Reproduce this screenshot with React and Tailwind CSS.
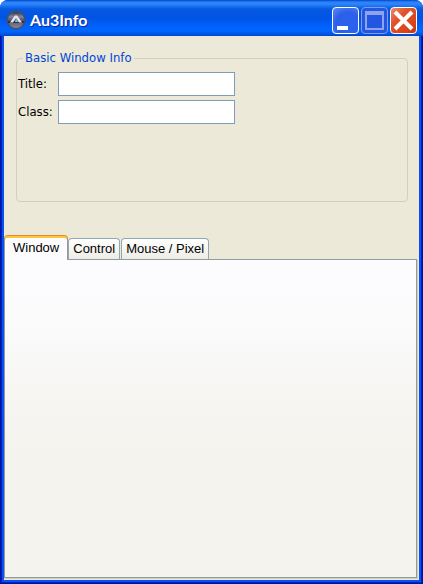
import { useState } from "react";

const tabs = ["Window", "Control", "Mouse / Pixel"];

function AppIcon() {
  return (
    <svg className="h-5 w-5 shrink-0" viewBox="0 0 20 20" aria-hidden="true">
      <defs>
        <linearGradient id="disc" x1="0" y1="0" x2="0" y2="1">
          <stop offset="0" stopColor="#34384a" />
          <stop offset="0.3" stopColor="#8189a8" />
          <stop offset="0.5" stopColor="#50566c" />
          <stop offset="1" stopColor="#8088a2" />
        </linearGradient>
      </defs>
      <circle cx="10" cy="10" r="9.5" fill="#4a4f60" />
      <circle cx="10" cy="10" r="8" fill="url(#disc)" />
      <path d="M1.500 11 L18.500 11 L18 13 L2 13 Z" fill="#30333f" />
      <path d="M4 12.500 L8.500 6 Q10 4.500 11.500 6 L16 12.500 L13 12.500 L10 8 L7 12.500 Z" fill="#e4e7f0" />
      <path d="M10 9 L12 12 L9 12 Z" fill="#aeb4c6" />
    </svg>
  );
}

function TitleBar() {
  const button =
    "flex h-[27px] w-[27px] items-center justify-center rounded border";
  return (
    <header className="flex h-9 shrink-0 items-center bg-[linear-gradient(to_bottom,#0042d0_0px,#2a83f5_2px,#2c86fa_4px,#0559e2_9px,#0054e3_18px,#0061fc_26px,#0066ff_31px,#0050dc_35px,#0040c0_36px)] px-[6px] pt-1">
      <AppIcon />
      <h1 className="ml-1 flex-1 font-['Lato','Open_Sans',sans-serif] text-base leading-5 font-bold text-white [text-shadow:1px_1px_0_#0a2a94]">
        Au3Info
      </h1>
      <div className="flex gap-[2px]">
        <button aria-label="Minimize" className={`${button} border-white bg-[radial-gradient(circle_at_60%_65%,#2a62f0,#2d60e8_55%,#5f8af5)]`}>
          <svg className="h-[25px] w-[25px]" viewBox="0 0 25 25">
            <path d="M4 18h11v4H4z" fill="#fff" />
          </svg>
        </button>
        <button aria-label="Maximize" disabled className={`${button} border-[#7d9bf3] bg-[#2357e1]`}>
          <svg className="h-[25px] w-[25px]" viewBox="0 0 25 25">
            <path d="M3 3h19v19H3z M5 7v13h15V7z" fillRule="evenodd" fill="#8fa2ee" />
          </svg>
        </button>
        <button aria-label="Close" className={`${button} border-white bg-[linear-gradient(135deg,#ee8a6c,#e0532c_35%,#dc4418_75%,#bd3510)]`}>
          <svg className="h-[25px] w-[25px]" viewBox="0 0 25 25">
            <path d="M4 4l17 17M21 4L4 21" stroke="#fff" strokeWidth="4" />
          </svg>
        </button>
      </div>
    </header>
  );
}

function Field({ id, label }) {
  return (
    <div className="flex items-center">
      <label htmlFor={id} className="w-10 leading-6">
        {label}
      </label>
      <input
        id={id}
        type="text"
        className="h-6 w-[177px] border border-[#7f9db9] bg-white px-1 outline-none"
      />
    </div>
  );
}

export default function App() {
  const [active, setActive] = useState("Window");
  return (
    <div className="min-h-screen bg-white">
      <main className="flex min-h-screen flex-col overflow-hidden rounded-t-lg bg-[#0831d9]">
        <TitleBar />
        <div className="flex flex-1 flex-col border-x border-b border-[#001590]">
          <div className="flex flex-1 flex-col border-x border-b border-[#0020d0]">
            <div className="flex flex-1 flex-col border-x-2 border-b-2 border-[#0a50ee]">
              <div className="flex flex-1 flex-col bg-[#ece9d8] pr-[2px] pb-[2px]">
                <fieldset className="mt-[14px] mr-[9px] ml-3 h-[152px] rounded border border-[#d0d0bf] px-px pt-[6px] font-['DejaVu_Sans_Condensed','Noto_Sans',sans-serif] text-[13px] text-black">
                  <legend className="ml-[5px] px-[2px] text-[13px] leading-4 text-[#0046d5]">
                    Basic Window Info
                  </legend>
                  <div className="flex flex-col gap-1">
                    <Field id="title" label="Title:" />
                    <Field id="class" label="Class:" />
                  </div>
                </fieldset>
                <div role="tablist" className="relative z-10 mt-[34px] -mb-px flex items-end font-['Liberation_Sans',Arial,sans-serif] text-[13px] text-black">
                  {tabs.map((name) => (
                    <button
                      key={name}
                      role="tab"
                      aria-selected={active === name}
                      onClick={() => setActive(name)}
                      className={
                        active === name
                          ? "h-6 rounded-t border border-t-2 border-b-0 border-[#919b9c] border-t-[#ffc73c] bg-[#fcfcfe] px-2 pb-[2px] leading-4 shadow-[0_-1px_0_#e68b2c]"
                          : "mr-px h-[22px] rounded-t border border-[#91a7b4] border-b-[#919b9c] bg-linear-to-b from-white to-[#edece6] px-1 leading-4"
                      }
                    >
                      {name}
                    </button>
                  ))}
                </div>
                <section
                  role="tabpanel"
                  aria-label={active}
                  className="flex-1 border border-[#919b9c] bg-linear-to-b from-[#fcfcfe] from-10% to-[#f4f3ee] to-60% shadow-[1px_1px_0_#d0cebf]"
                />
              </div>
            </div>
          </div>
        </div>
      </main>
    </div>
  );
}
